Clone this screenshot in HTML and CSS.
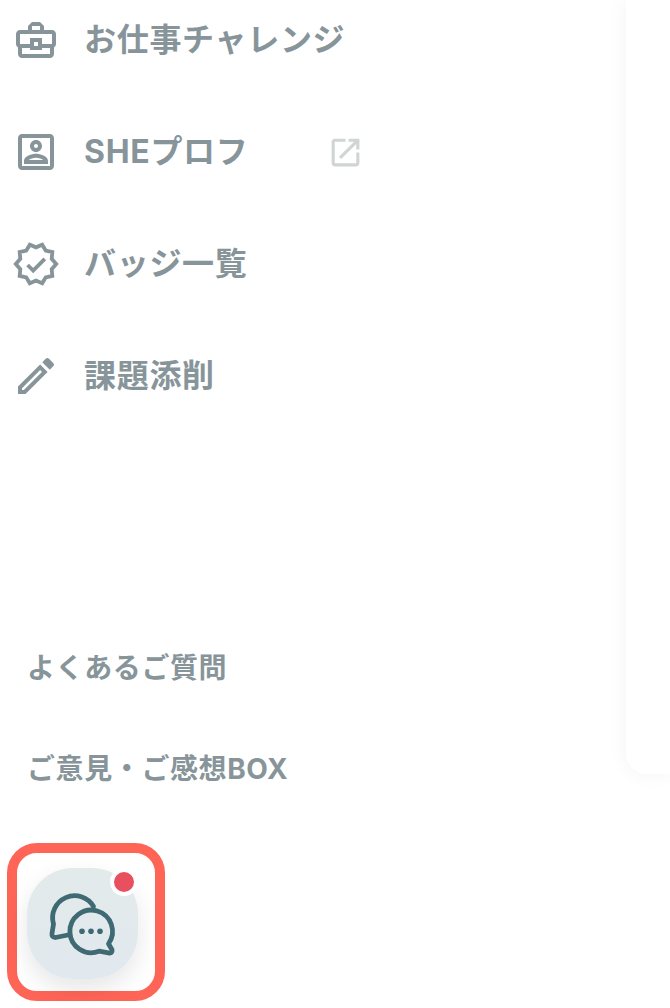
FILE: index.html
```html
<!DOCTYPE html>
<html lang="ja">
<head>
    <meta charset="UTF-8">
    <meta name="viewport" content="width=device-width, initial-scale=1.0">
    <title>お仕事チャレンジ</title>
    <link rel="stylesheet" href="styles.css">
</head>
<body>
    <div class="layout">
        <aside class="sidebar">
            <nav class="nav">
                <a class="nav-item">
                    <svg class="nav-icon" viewBox="0 0 24 24"><path d="M20 7h-4V5l-2-2h-4L8 5v2H4c-1.1 0-2 .9-2 2v5c0 .75.4 1.38 1 1.73V19c0 1.11.89 2 2 2h14c1.11 0 2-.89 2-2v-3.28c.59-.35 1-.99 1-1.72V9c0-1.1-.9-2-2-2zM10 5h4v2h-4V5zM4 9h16v5h-5v-3H9v3H4V9zm9 6h-2v-2h2v2zm6 4H5v-3h4v1h6v-1h4v3z"/></svg>
                    <span>お仕事チャレンジ</span>
                </a>
                <a class="nav-item">
                    <svg class="nav-icon" viewBox="0 0 24 24"><path d="M19 5v14H5V5h14m0-2H5c-1.11 0-2 .9-2 2v14c0 1.1.89 2 2 2h14c1.1 0 2-.9 2-2V5c0-1.1-.89-2-2-2zm-7 9c-1.65 0-3-1.35-3-3s1.35-3 3-3 3 1.35 3 3-1.35 3-3 3zm0-4c-.55 0-1 .45-1 1s.45 1 1 1 1-.45 1-1-.45-1-1-1zm6 10H6v-1.53c0-2.5 3.97-3.58 6-3.58s6 1.08 6 3.58V18zm-9.69-2h7.38c-.69-.56-2.38-1.12-3.69-1.12s-3.01.56-3.69 1.12z"/></svg>
                    <span>SHEプロフ</span>
                    <svg class="ext-icon" viewBox="0 0 24 24"><path d="M19 19H5V5h7V3H5c-1.11 0-2 .9-2 2v14c0 1.1.89 2 2 2h14c1.1 0 2-.9 2-2v-7h-2v7zM14 3v2h3.59l-9.83 9.83 1.41 1.41L19 6.41V10h2V3h-7z"/></svg>
                </a>
                <a class="nav-item">
                    <svg class="nav-icon nav-icon-line" viewBox="0 0 24 24"><polygon points="22.1,12 19.85,9.43 20.17,6.04 16.84,5.29 15.1,2.34 12,3.68 8.9,2.34 7.16,5.27 3.83,6.02 4.15,9.42 1.9,12 4.15,14.57 3.83,17.97 7.16,18.73 8.9,21.66 12,20.31 15.1,21.65 16.84,18.71 20.17,17.96 19.85,14.57"/><polyline points="7.8,12.5 10.6,15.3 16.4,9.4"/></svg>
                    <span>バッジ一覧</span>
                </a>
                <a class="nav-item">
                    <svg class="nav-icon" viewBox="0 0 24 24"><path d="M14.06 9.02l.92.92L5.92 19H5v-.92l9.06-9.06M17.66 3c-.25 0-.51.1-.7.29l-1.83 1.83 3.75 3.75 1.83-1.83c.39-.39.39-1.02 0-1.41l-2.34-2.34c-.2-.2-.45-.29-.71-.29zm-3.6 3.19L3 17.25V21h3.75L17.81 9.94l-3.75-3.75z"/></svg>
                    <span>課題添削</span>
                </a>
            </nav>

            <div class="sub-links">
                <a class="sub-link">よくあるご質問</a>
                <a class="sub-link">ご意見・ご感想BOX</a>
            </div>

            <div class="chat-frame">
                <button class="chat-btn">
                    <svg class="chat-icon" viewBox="0 0 110 110">
                        <path d="M66.5 37.5 A22 22 0 0 0 26.5 55 L25 64.5 Q24.5 68.5 28.5 68.5 L41 66"/>
                        <path d="M81.5 74.8 L85 80.8 Q85.8 84.8 81.5 83.8 L72 82.2 A21.3 21.3 0 1 1 81.5 74.8 Z"/>
                        <circle class="chat-dot" cx="55" cy="62.3" r="2.8"/>
                        <circle class="chat-dot" cx="64" cy="62.3" r="2.8"/>
                        <circle class="chat-dot" cx="73" cy="62.3" r="2.8"/>
                    </svg>
                    <span class="badge"></span>
                </button>
            </div>
        </aside>
        <main class="card"></main>
    </div>
</body>
</html>
```

FILE: styles.css
```css
html, body {
    margin: 0;
    padding: 0;
    height: 100%;
    overflow: hidden;
    background-color: white;
}

body {
    font-family: Inter, "Noto Sans CJK JP", sans-serif;
    color: #87959a;
}

.layout {
    display: grid;
    grid-template-columns: 626px 1fr;
    height: 1008px;
}

.sidebar {
    display: flex;
    flex-direction: column;
}

.nav {
    display: flex;
    flex-direction: column;
    gap: 64px;
    padding: 16px 0 0 12px;
}

.nav-item {
    display: flex;
    align-items: center;
    height: 48px;
    font-size: 32px;
    font-weight: 700;
    letter-spacing: 0.7px;
    line-height: 48px;
}

.nav-icon {
    width: 48px;
    height: 48px;
    margin-right: 24px;
    fill: #87959a;
    flex-shrink: 0;
}

.nav-icon-line {
    fill: none;
    stroke: #87959a;
    stroke-width: 1.9;
}

.ext-icon {
    width: 37px;
    height: 37px;
    margin-left: 78px;
    fill: #d0d4d5;
}

.sub-links {
    display: flex;
    flex-direction: column;
    gap: 61px;
    margin-top: 248px;
    padding-left: 27px;
}

.sub-link {
    height: 40px;
    font-size: 28px;
    font-weight: 700;
    letter-spacing: 0.6px;
    line-height: 40px;
}

.chat-frame {
    display: flex;
    box-sizing: border-box;
    width: 158px;
    height: 158px;
    margin: 54px 0 0 7px;
    padding: 15px 17px 0 10px;
    border: 10px solid #ff6557;
    border-radius: 30px;
}

.chat-btn {
    position: relative;
    flex-shrink: 0;
    width: 111px;
    height: 111px;
    padding: 0;
    border: none;
    border-radius: 46px;
    background: linear-gradient(#e2eaea, #e1e9ef);
    box-shadow: 0 10px 24px rgba(0, 0, 0, 0.1);
}

.chat-icon {
    display: block;
    width: 110px;
    height: 110px;
    fill: none;
    stroke: #3f6a73;
    stroke-width: 4.8;
    stroke-linejoin: round;
    stroke-linecap: round;
}

.chat-dot {
    fill: #3f6a73;
    stroke: none;
}

.badge {
    position: absolute;
    top: 0;
    right: 0;
    width: 20px;
    height: 20px;
    border: 4px solid white;
    border-radius: 50%;
    background-color: #e85060;
}

.card {
    height: 774px;
    background-color: white;
    border-bottom-left-radius: 20px;
    box-shadow: 0 0 20px rgba(0, 0, 0, 0.05);
}
```
